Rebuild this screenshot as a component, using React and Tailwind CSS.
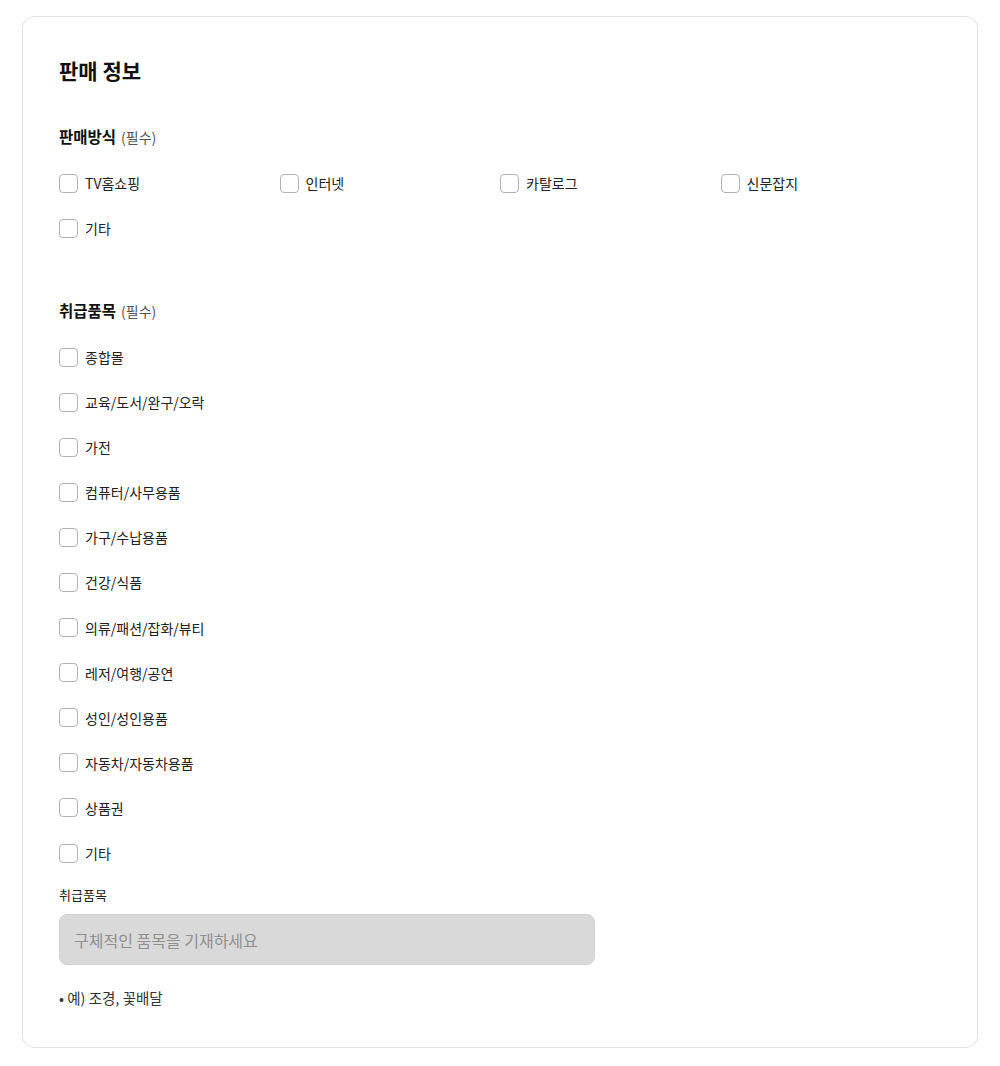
const methods = ['TV홈쇼핑', '인터넷', '카탈로그', '신문잡지', '기타'];

const items = [
  '종합몰',
  '교육/도서/완구/오락',
  '가전',
  '컴퓨터/사무용품',
  '가구/수납용품',
  '건강/식품',
  '의류/패션/잡화/뷰티',
  '레저/여행/공연',
  '성인/성인용품',
  '자동차/자동차용품',
  '상품권',
  '기타',
];

function Check({ label }) {
  return (
    <label className="flex items-center h-6 gap-[7px] cursor-pointer">
      <span className="w-[19px] h-[19px] rounded-[4px] border border-[#b3b3b3] bg-white shrink-0" />
      <span className="text-[14px] leading-[20px] text-[#222]">{label}</span>
    </label>
  );
}

function SectionLabel({ children }) {
  return (
    <div className="h-[22px] flex items-center">
      <span className="text-[15.5px] font-bold text-[#111]">{children}</span>
      <span className="ml-[5px] text-[14px] text-[#555]">(필수)</span>
    </div>
  );
}

export default function App() {
  return (
    <div
      className="bg-white min-h-[1066px] pt-4 px-[22px]"
      style={{ fontFamily: '"Noto Sans CJK KR", "Noto Sans", sans-serif' }}
    >
      <div className="border border-[#e2e2e2] rounded-[12px] pt-[39px] pb-[39px] pl-[36px] pr-[36px]">
        {/* Title */}
        <h2 className="text-[21px] leading-[28px] font-bold text-[#111]">판매 정보</h2>

        {/* 판매방식 */}
        <div className="mt-[42px]">
          <SectionLabel>판매방식</SectionLabel>
          <div className="mt-[23px] grid grid-cols-4 gap-y-[21px]">
            {methods.map((m, i) => (
              <Check key={i} label={m} />
            ))}
          </div>
        </div>

        {/* 취급품목 */}
        <div className="mt-[60px]">
          <SectionLabel>취급품목</SectionLabel>
          <div className="mt-[23px] flex flex-col gap-y-[21.1px]">
            {items.map((m, i) => (
              <Check key={i} label={m} />
            ))}
          </div>
        </div>

        <div className="mt-[21px] text-[13px] leading-[18px] text-[#222]">취급품목</div>
        <input
          className="mt-[10px] w-[536px] h-[51px] rounded-[8px] bg-[#d9d9d9] border border-[#d0d0d0] px-[14px] text-[16px] text-[#333] placeholder:text-[#8f8f8f] outline-none"
          placeholder="구체적인 품목을 기재하세요"
          disabled
        />
        <p className="mt-[23px] text-[14.5px] leading-[20px] text-[#333]">• 예) 조경, 꽃배달</p>
      </div>
    </div>
  );
}
